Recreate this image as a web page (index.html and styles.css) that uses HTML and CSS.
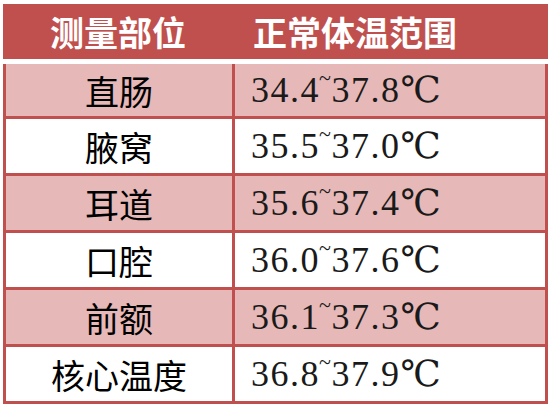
FILE: index.html
```html
<!DOCTYPE html>
<html lang="zh">
<head>
<meta charset="utf-8">
<title>体温范围</title>
<link rel="stylesheet" href="styles.css">
</head>
<body>
<div class="table">
  <div class="head">
    <div class="h1">测量部位</div>
    <div class="h2">正常体温范围</div>
  </div>
  <div class="body">
    <div class="row shade"><div class="site">直肠</div><div class="range">34.4<span class="tl">~</span>37.8℃</div></div>
    <div class="row"><div class="site">腋窝</div><div class="range">35.5<span class="tl">~</span>37.0℃</div></div>
    <div class="row shade"><div class="site">耳道</div><div class="range">35.6<span class="tl">~</span>37.4℃</div></div>
    <div class="row"><div class="site">口腔</div><div class="range">36.0<span class="tl">~</span>37.6℃</div></div>
    <div class="row shade"><div class="site">前额</div><div class="range">36.1<span class="tl">~</span>37.3℃</div></div>
    <div class="row last"><div class="site">核心温度</div><div class="range">36.8<span class="tl">~</span>37.9℃</div></div>
  </div>
</div>
</body>
</html>
```

FILE: styles.css
```css
html, body {
  margin: 0;
  padding: 0;
  background: #ffffff;
}
body {
  width: 551px;
  height: 408px;
  overflow: hidden;
}
.table {
  margin: 4px 0 0 3px;
  width: 545px;
}
.head {
  display: flex;
  height: 55px;
  background: #c0504d;
  color: #ffffff;
  font-family: "Noto Sans CJK SC", sans-serif;
  font-weight: 700;
  font-size: 34px;
}
.h1 {
  width: 230px;
  display: flex;
  align-items: center;
  justify-content: center;
}
.h2 {
  flex: 1;
  display: flex;
  align-items: center;
  padding-left: 20px;
}
.body {
  margin-top: 5px;
  border-left: 3px solid #c0504d;
  border-right: 3px solid #c0504d;
  border-bottom: 3px solid #c0504d;
}
.row {
  display: flex;
  height: 54px;
  border-bottom: 3px solid #c0504d;
  background: #ffffff;
}
.row:first-child {
  height: 52px;
}
.row.last {
  border-bottom: none;
}
.row.shade {
  background: #e6b8b7;
}
.site {
  width: 226px;
  border-right: 3px solid #c0504d;
  display: flex;
  align-items: center;
  justify-content: center;
  font-family: "Noto Sans CJK SC", sans-serif;
  font-size: 34px;
  color: #000000;
}
.range {
  flex: 1;
  display: flex;
  align-items: center;
  padding-left: 16px;
  font-family: "Liberation Serif", "Times New Roman", "DejaVu Serif", serif;
  font-size: 36px;
  letter-spacing: 1.5px;
  color: #1a1a1a;
}
.tl {
  font-size: 22px;
  position: relative;
  top: -12px;
  margin: 0 -1px;
}
```
